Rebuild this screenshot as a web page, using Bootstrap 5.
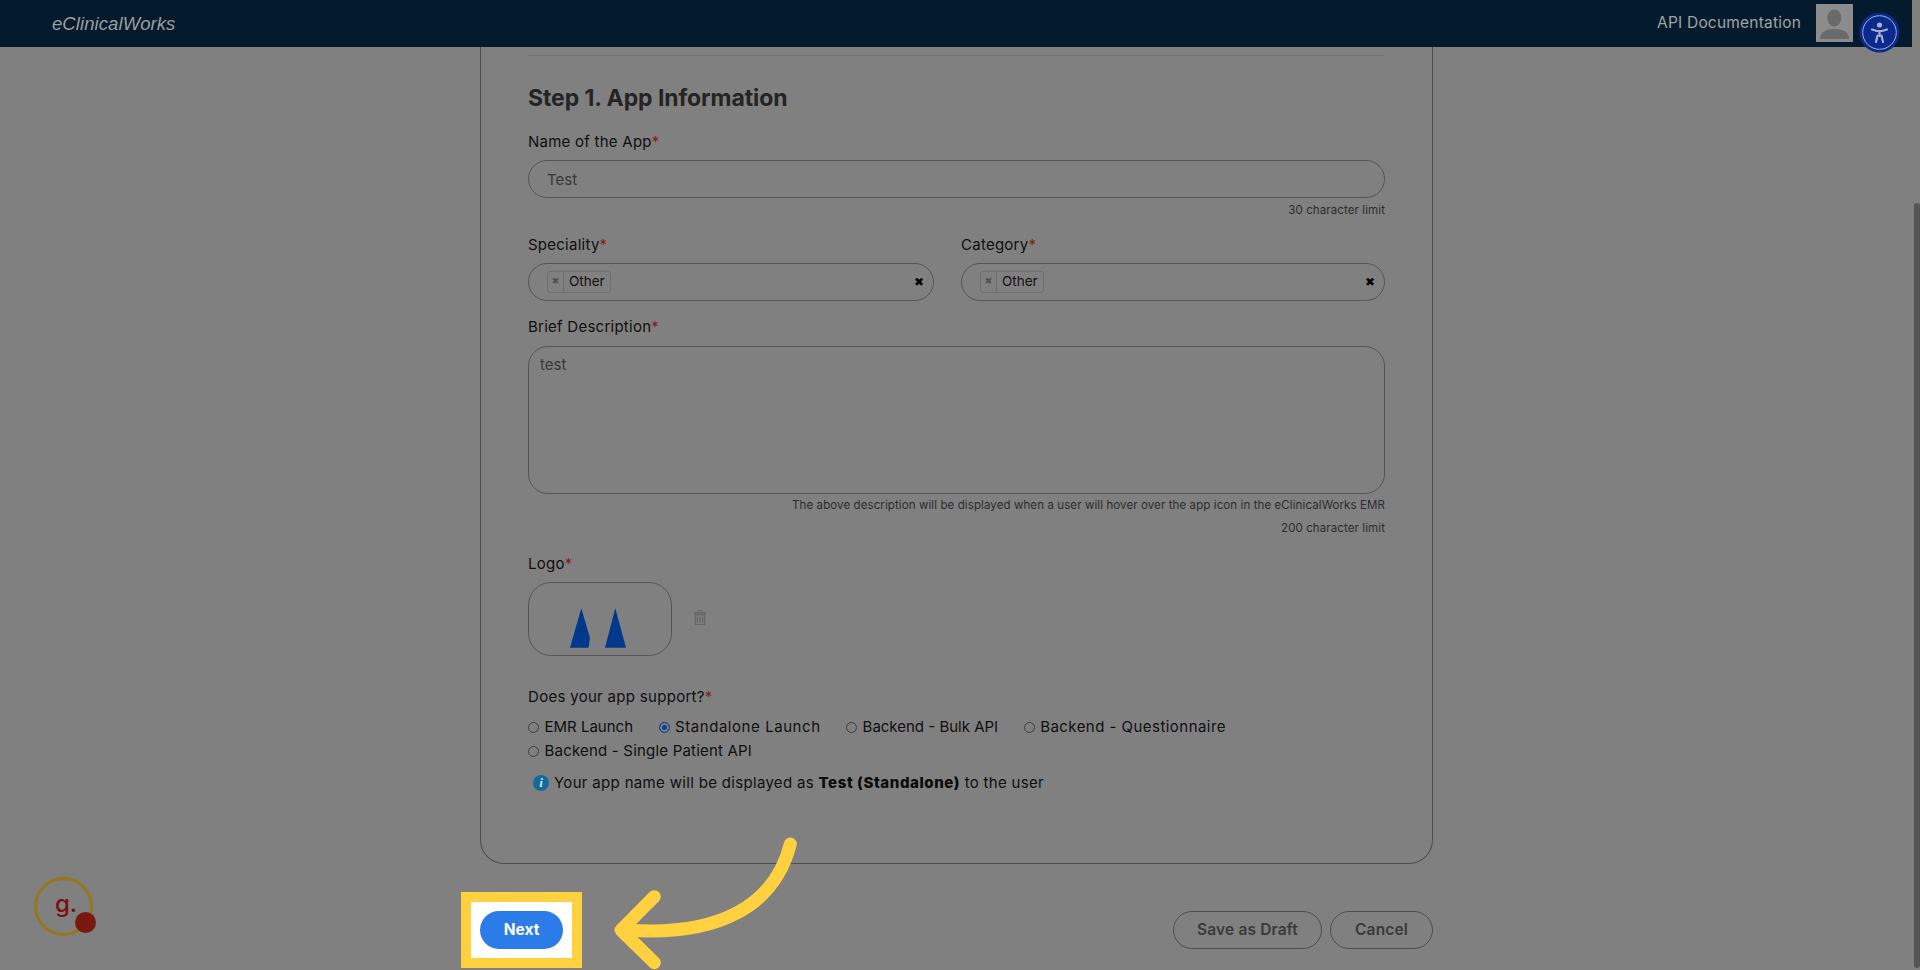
<!doctype html>
<html lang="en">
<head>
<meta charset="utf-8">
<title>App Information</title>
<link rel="stylesheet" href="https://cdn.jsdelivr.net/npm/bootstrap@5.3.0/dist/css/bootstrap.min.css">
<style>
html,body{height:970px;margin:0;overflow:hidden;background:#808080;}
body{font-family:Inter,"Noto Sans",sans-serif;color:#0f0f0f;font-size:15px;line-height:24px;}
.shell{width:1920px;height:970px;position:relative;}
.main-col{width:1912px;height:970px;}
.sb-col{width:8px;height:970px;padding:203px 0 2px 1.5px;}
.sb-thumb{width:6px;height:100%;background:#555;border-radius:3px;}
.top-bar{height:47px;background:#041b2d;padding:0 0 0 52px;flex-shrink:0;position:relative;z-index:2;}
.brand-txt{font-family:"Liberation Sans",sans-serif;font-style:italic;font-size:18.5px;color:#9d9d9d;letter-spacing:.08px;}
.api-link{font-size:15.5px;color:#a3a3a3;letter-spacing:.2px;margin-right:15px;margin-bottom:1px;}
.avatar-box{width:37px;height:38px;background:#8c8c8c;margin-right:59px;margin-top:-1px;display:block;}
.a11y-badge{position:absolute;left:1859px;top:12px;z-index:3;display:block;}
.form-panel{margin-left:480px;width:953px;height:817px;border:1px solid #4e4e4e;border-top:0;border-radius:0 0 24px 24px;padding:8px 47px 0;}
.top-rule{border-top:1px solid #757575;opacity:1;margin:0 0 28px;}
.step-head{font-size:23px;line-height:28px;font-weight:700;color:#242424;margin:0 0 18px;letter-spacing:-.08px;}
.fld-label{display:block;margin:0 0 6px;font-size:15px;line-height:24px;color:#0f0f0f;letter-spacing:.25px;}
.req{color:#8f1818;}
.pill-input{height:38px;border:1px solid #555;border-radius:19px;background:transparent;color:#383838;font-size:15px;padding:0 18px;}
.pill-input:focus{background:transparent;color:#383838;border-color:#555;box-shadow:none;}
.hint-txt{font-size:11.5px;line-height:18px;color:#2c2c2c;text-align:right;letter-spacing:.1px;}
.hint-one{margin:3px 0 14px;}
.sel-wrap{height:38px;border:1px solid #555;border-radius:19px;padding:0 9px 0 18px;}
.sel-spec{width:406px;}
.sel-cat{width:424px;}
.sel-row{gap:27px;margin-bottom:14px;}
.sel-wrap .tag-box{margin-top:-1px;}
.tag-box{height:22px;border:1px solid #6f6f6f;border-radius:3px;font-size:13.5px;color:#0f0f0f;line-height:19px;}
.tag-x{width:16px;border-right:1px solid #6f6f6f;font-size:9px;color:#505050;text-align:center;font-family:"DejaVu Sans",sans-serif;}
.tag-name{padding:0 5px;}
.clear-x{font-size:12px;color:#000;font-family:"DejaVu Sans",sans-serif;margin-top:-1px;}
.desc-label{margin-bottom:7px;}
.desc-area{height:148px;border:1px solid #555;border-radius:20px;background:transparent;color:#383838;font-size:15px;padding:7px 11px;resize:none;}
.desc-area:focus{background:transparent;color:#383838;border-color:#555;box-shadow:none;}
.hint-two{margin:2px 0 5px;}
.hint-three{margin:0 0 15px;}
.logo-label{margin-bottom:6px;}
.logo-box{width:144px;height:74px;border:1px solid #555;border-radius:23px;}
.logo-row{gap:22px;margin-bottom:29px;}
.trash-ico{margin-top:-4px;}
.sup-label{margin-bottom:6px;letter-spacing:.3px;}
.radio-wrap{gap:0 25.500px;}
.radio-item{height:24px;font-size:15px;color:#0f0f0f;}
.radio-item .form-check-input{width:11px;height:11px;margin:0 5.500px 0 0;background-color:transparent;border:1px solid #3d3d3d;flex-shrink:0;}
.radio-item .form-check-input:checked{background-color:#0d3f95;border-color:#0d3f95;background-image:none;box-shadow:inset 0 0 0 2px #808080;}
.radio-item label{margin:0;}
.lbl-wide label{letter-spacing:.56px;}
.lbl-quest label{letter-spacing:.46px;}
.lbl-mid label{letter-spacing:.2px;}
.info-line{margin:8px 0 0 5px;font-size:15px;color:#0f0f0f;gap:5px;letter-spacing:.32px;}
.info-dot{width:16px;height:16px;border-radius:50%;background:#136b9c;color:#cfe0ea;font:italic 700 13px/16px "Liberation Serif",serif;text-align:center;letter-spacing:0;}
.info-line b{font-weight:800;color:#0a0a0a;letter-spacing:.6px;}
.btn-row{margin:28px 0 0 461px;width:972px;height:76px;}
.hl-frame{border:10px solid #ffd040;background:#fff;padding:9px;}
.next-btn{width:83px;height:38px;border-radius:19px;background:#2b7be8;border:0;color:#fff;font-size:15.500px;font-weight:700;padding:0;}
.next-btn:hover{background:#2b7be8;color:#fff;}
.ghost-btn{height:38px;border-radius:19px;border:1px solid #4e4e4e;background:transparent;color:#3a3a3a;font-size:15.500px;font-weight:600;padding:0;letter-spacing:.15px;}
.ghost-btn:hover{background:transparent;color:#3a3a3a;border-color:#4e4e4e;}
.btn-draft{width:149px;}
.btn-cancel{width:103px;}
.ghost-gap{gap:8px;}
.arrow-art{position:absolute;left:0;top:0;z-index:4;pointer-events:none;}
.g-badge{position:absolute;left:33px;top:876px;width:66px;height:62px;z-index:3;}
.g-ring{position:absolute;left:1px;top:1px;width:59px;height:59px;border:3.500px solid #94781a;border-radius:50%;}
.g-letter{position:absolute;left:22px;top:16px;font-size:24px;line-height:24px;font-weight:500;color:#7a0f0f;}
.g-dot{position:absolute;left:42px;top:36px;width:21px;height:21px;border-radius:50%;background:#7a1810;}
</style>
</head>
<body>
<div class="shell d-flex">
  <div class="main-col d-flex flex-column">
    <nav class="top-bar d-flex align-items-center justify-content-between">
      <span class="brand-txt">eClinicalWorks</span>
      <div class="d-flex align-items-center">
        <span class="api-link">API Documentation</span>
        <svg class="avatar-box" viewBox="0 0 37 38" aria-hidden="true">
          <ellipse cx="18.300" cy="14" rx="7" ry="8.500" fill="#6a6a6a"/>
          <path d="M4 35c0-7 6-10 14.500-10S33 28 33 35z" fill="#6a6a6a"/>
        </svg>
      </div>
    </nav>
    <section class="form-panel">
      <hr class="top-rule">
      <h2 class="step-head">Step 1. App Information</h2>
      <label class="fld-label">Name of the App<span class="req">*</span></label>
      <input class="form-control pill-input" value="Test">
      <div class="hint-txt hint-one">30 character limit</div>
      <div class="d-flex sel-row">
        <div class="sel-spec">
          <label class="fld-label">Speciality<span class="req">*</span></label>
          <div class="sel-wrap d-flex align-items-center justify-content-between">
            <span class="tag-box d-inline-flex"><span class="tag-x">✖</span><span class="tag-name">Other</span></span>
            <span class="clear-x">✖</span>
          </div>
        </div>
        <div class="sel-cat">
          <label class="fld-label">Category<span class="req">*</span></label>
          <div class="sel-wrap d-flex align-items-center justify-content-between">
            <span class="tag-box d-inline-flex"><span class="tag-x">✖</span><span class="tag-name">Other</span></span>
            <span class="clear-x">✖</span>
          </div>
        </div>
      </div>
      <label class="fld-label desc-label">Brief Description<span class="req">*</span></label>
      <textarea class="form-control desc-area">test</textarea>
      <div class="hint-txt hint-two">The above description will be displayed when a user will hover over the app icon in the eClinicalWorks EMR</div>
      <div class="hint-txt hint-three">200 character limit</div>
      <label class="fld-label logo-label">Logo<span class="req">*</span></label>
      <div class="d-flex align-items-center logo-row">
        <div class="logo-box">
          <svg width="142" height="72" viewBox="0 0 142 72" aria-hidden="true">
            <path d="M52.300 25.300L41 64.700H59.500L61 55z" fill="#00388c"/>
            <path d="M86.300 25.300L76 64.700H97z" fill="#00388c"/>
          </svg>
        </div>
        <svg class="trash-ico" width="12" height="15" viewBox="0 0 12 15" aria-hidden="true">
          <path d="M4 1.500V.5h4v1M.5 2.500h11v1.500H.5zM1.500 5h9v9.500h-9zM3.500 6.500v6.500M6 6.500v6.500M8.500 6.500v6.500" fill="none" stroke="#666" stroke-width="1.200"/>
        </svg>
      </div>
      <label class="fld-label sup-label">Does your app support?<span class="req">*</span></label>
      <div class="d-flex flex-wrap radio-wrap">
        <div class="radio-item d-flex align-items-center"><input class="form-check-input" type="radio" name="sup" id="r1"><label for="r1">EMR Launch</label></div>
        <div class="radio-item lbl-wide d-flex align-items-center"><input class="form-check-input" type="radio" name="sup" id="r2" checked><label for="r2">Standalone Launch</label></div>
        <div class="radio-item d-flex align-items-center"><input class="form-check-input" type="radio" name="sup" id="r3"><label for="r3">Backend - Bulk API</label></div>
        <div class="radio-item lbl-quest d-flex align-items-center"><input class="form-check-input" type="radio" name="sup" id="r4"><label for="r4">Backend - Questionnaire</label></div>
        <div class="radio-item lbl-mid d-flex align-items-center"><input class="form-check-input" type="radio" name="sup" id="r5"><label for="r5">Backend - Single Patient API</label></div>
      </div>
      <div class="info-line d-flex align-items-center">
        <span class="info-dot">i</span>
        <span>Your app name will be displayed as <b>Test (Standalone)</b> to the user</span>
      </div>
    </section>
    <div class="btn-row d-flex align-items-center justify-content-between">
      <div class="hl-frame"><button type="button" class="btn next-btn d-block">Next</button></div>
      <div class="d-flex ghost-gap">
        <button type="button" class="btn ghost-btn btn-draft">Save as Draft</button>
        <button type="button" class="btn ghost-btn btn-cancel">Cancel</button>
      </div>
    </div>
  </div>
  <div class="sb-col"><div class="sb-thumb"></div></div>

  <svg class="a11y-badge" width="41" height="41" viewBox="0 0 41 41" aria-hidden="true">
    <circle cx="20.500" cy="20.500" r="20" fill="#0a2a8f"/>
    <circle cx="20.500" cy="20.500" r="16.800" fill="none" stroke="#a8b0c8" stroke-width="1"/>
    <circle cx="20.500" cy="13" r="2.600" fill="#a8b0c8"/>
    <path d="M13 17.500l5 1.500h5l5-1.500M20.500 19v5M18.500 23.500l-1.500 6.500M22.500 23.500l1.500 6.500" fill="none" stroke="#a8b0c8" stroke-width="2.200" stroke-linecap="round" stroke-linejoin="round"/>
  </svg>

  <div class="g-badge">
    <div class="g-ring"></div>
    <div class="g-letter">g.</div>
    <div class="g-dot"></div>
  </div>

  <svg class="arrow-art" width="1920" height="970" viewBox="0 0 1920 970" aria-hidden="true">
    <path d="M790.300 844C775 905 720 937 626 930" fill="none" stroke="#ffd040" stroke-width="13" stroke-linecap="round"/>
    <path d="M654.300 896.700L621 930L654.300 962.700" fill="none" stroke="#ffd040" stroke-width="13" stroke-linecap="round" stroke-linejoin="round"/>
  </svg>
</div>
<script src="https://cdn.jsdelivr.net/npm/bootstrap@5.3.0/dist/js/bootstrap.bundle.min.js"></script>
</body>
</html>
